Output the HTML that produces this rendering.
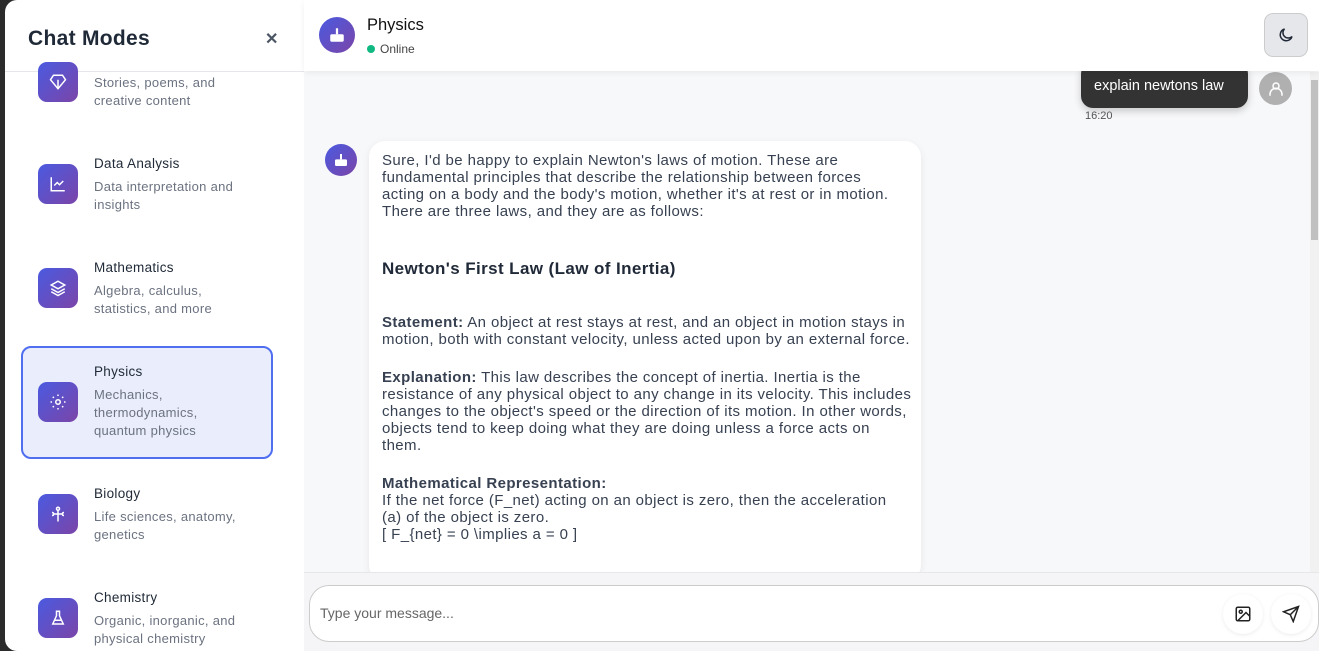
<!DOCTYPE html>
<html><head><meta charset="utf-8"><style>
*{box-sizing:border-box;margin:0;padding:0}
body{width:1319px;height:651px;overflow:hidden;background:#2b2b2b;font-family:"Liberation Sans",sans-serif;position:relative}
.side{position:absolute;left:5px;top:0;width:299px;height:651px;background:#fff;border-radius:12px 0 0 12px;overflow:hidden}
.side h1{position:absolute;left:23px;top:27px;font-size:21px;font-weight:600;color:#1f2937;letter-spacing:.3px}
.close{position:absolute;left:260px;top:29px;font-size:16px;color:#4b5563;font-weight:bold}
.hr{position:absolute;left:0;top:71px;width:299px;height:1px;background:#e5e7eb}
.item{position:absolute;left:33px}
.ic{position:absolute;left:0;width:40px;height:40px;border-radius:9px;background:linear-gradient(135deg,#4a5ae0,#7b45a8);display:flex;align-items:center;justify-content:center}
.t{position:absolute;left:56px;font-size:13.5px;color:#1f2937;white-space:nowrap;letter-spacing:.3px}
.d{position:absolute;left:56px;font-size:13px;color:#6b7280;line-height:18px;white-space:nowrap;letter-spacing:.3px}
.card{position:absolute;left:16px;top:346px;width:252px;height:113px;border:2px solid #4f6ef0;border-radius:10px;background:#eaeefc}
.main{position:absolute;left:304px;top:0;width:1015px;height:651px;background:#f7f8fa}
.hdr{position:absolute;left:0;top:0;width:1015px;height:71px;background:#fff;box-shadow:0 2px 6px rgba(0,0,0,.06);z-index:5}
.av{position:absolute;border-radius:50%;background:linear-gradient(135deg,#4a5ae0,#7b45a8);display:flex;align-items:center;justify-content:center}
.bubble{position:absolute;left:65px;top:141px;width:552px;height:440px;background:#fff;border-radius:16px;box-shadow:0 2px 8px rgba(0,0,0,.07);padding:11px 13px;font-size:15px;line-height:17px;color:#374151;white-space:nowrap;letter-spacing:.4px}
.bubble p{margin-bottom:21px}
.bubble h3{font-size:17px;color:#1f2937;margin:40px 0 37px}
.foot{position:absolute;left:0;top:572px;width:1015px;height:79px;background:#f5f5f7;border-top:1px solid #e5e7eb}
.inp{position:absolute;left:5px;top:12px;width:1010px;height:57px;border:1px solid #ccc;border-radius:20px;background:#fff}
.btn{position:absolute;top:8px;width:40px;height:40px;border-radius:50%;background:#fff;box-shadow:0 1px 4px rgba(0,0,0,.08);display:flex;align-items:center;justify-content:center}
</style></head><body>
<div class="side">
<h1>Chat Modes</h1><div class="close">✕</div>
<div class="hr"></div>
<div class="item" style="top:62px"><div class="ic" style="top:0"><svg width="18" height="18" viewBox="0 0 24 24" fill="none" stroke="#fff" stroke-width="2"><path d="M6 3h12l4 6-10 12L2 9z"/><path d="M12 9v12"/></svg></div><div class="d" style="top:12px">Stories, poems, and<br>creative content</div></div>
<div class="item" style="top:164px"><div class="ic" style="top:0"><svg width="18" height="18" viewBox="0 0 24 24" fill="none" stroke="#fff" stroke-width="2"><path d="M3 3v18h18"/><path d="M7 14l4-4 3 3 5-5"/></svg></div><div class="t" style="top:-8px">Data Analysis</div><div class="d" style="top:14px">Data interpretation and<br>insights</div></div>
<div class="item" style="top:268px"><div class="ic" style="top:0"><svg width="18" height="18" viewBox="0 0 24 24" fill="none" stroke="#fff" stroke-width="2"><path d="M12 3l9 5-9 5-9-5z"/><path d="M3 13l9 5 9-5"/><path d="M3 17l9 5 9-5"/></svg></div><div class="t" style="top:-8px">Mathematics</div><div class="d" style="top:14px">Algebra, calculus,<br>statistics, and more</div></div>
<div class="card"></div>
<div class="item" style="top:382px"><div class="ic" style="top:0"><svg width="18" height="18" viewBox="0 0 24 24" fill="none" stroke="#fff" stroke-width="2"><circle cx="12" cy="12" r="3"/><path d="M12 2v2M12 20v2M2 12h2M20 12h2M5 5l1.5 1.5M17.5 17.5L19 19M5 19l1.5-1.5M17.5 6.5L19 5"/></svg></div><div class="t" style="top:-18px">Physics</div><div class="d" style="top:4px">Mechanics,<br>thermodynamics,<br>quantum physics</div></div>
<div class="item" style="top:494px"><div class="ic" style="top:0"><svg width="18" height="18" viewBox="0 0 24 24" fill="none" stroke="#fff" stroke-width="2"><circle cx="12" cy="5" r="2"/><path d="M12 7v15M4 10c3 0 3 4 0 4M20 10c-3 0-3 4 0 4M6 12h12"/></svg></div><div class="t" style="top:-8px">Biology</div><div class="d" style="top:14px">Life sciences, anatomy,<br>genetics</div></div>
<div class="item" style="top:598px"><div class="ic" style="top:0"><svg width="18" height="18" viewBox="0 0 24 24" fill="none" stroke="#fff" stroke-width="2"><path d="M9 3h6M10 3v6l-5 11h14L14 9V3"/><path d="M7 15h10"/></svg></div><div class="t" style="top:-8px">Chemistry</div><div class="d" style="top:14px">Organic, inorganic, and<br>physical chemistry</div></div>
</div>
<div class="main">
<div class="hdr">
<div class="av" style="left:15px;top:17px;width:36px;height:36px"><svg width="18" height="18" viewBox="0 0 24 24" fill="#fff"><rect x="10.5" y="3" width="3" height="8"/><rect x="3" y="11" width="18" height="10" rx="2"/></svg></div>
<div style="position:absolute;left:63px;top:16px;font-size:16.5px;font-weight:500;color:#111">Physics</div>
<div style="position:absolute;left:63px;top:42px;font-size:12px;color:#444"><span style="display:inline-block;width:8px;height:8px;border-radius:50%;background:#10b981;margin-right:5px"></span>Online</div>
<div style="position:absolute;left:960px;top:13px;width:44px;height:44px;border-radius:9px;background:#e6e7eb;border:1px solid #ccc;display:flex;align-items:center;justify-content:center"><svg width="18" height="18" viewBox="0 0 24 24" fill="none" stroke="#1f2937" stroke-width="2"><path d="M20 14A8 8 0 1 1 10 4a6 6 0 0 0 10 10z"/></svg></div>
</div>
<div style="position:absolute;left:777px;top:62px;width:167px;height:46px;background:#333;border-radius:12px;color:#fff;font-size:14.5px;padding:16px 0 0 13px;box-shadow:0 3px 8px rgba(0,0,0,.2)">explain newtons law</div>
<div style="position:absolute;left:955px;top:72px;width:33px;height:33px;border-radius:50%;background:#b0b0b0;display:flex;align-items:center;justify-content:center"><svg width="18" height="18" viewBox="0 0 24 24" fill="none" stroke="#fff" stroke-width="2"><circle cx="12" cy="8" r="4"/><path d="M4 21v-2a6 6 0 0 1 16 0v2"/></svg></div>
<div style="position:absolute;left:781px;top:110px;font-size:11px;color:#555">16:20</div>
<div class="av" style="left:21px;top:144px;width:32px;height:32px"><svg width="16" height="16" viewBox="0 0 24 24" fill="#fff"><rect x="10.5" y="3" width="3" height="8"/><rect x="3" y="11" width="18" height="10" rx="2"/></svg></div>
<div class="bubble">
<p style="margin:0">Sure, I'd be happy to explain Newton's laws of motion. These are<br>fundamental principles that describe the relationship between forces<br>acting on a body and the body's motion, whether it's at rest or in motion.<br>There are three laws, and they are as follows:</p>
<h3>Newton's First Law (Law of Inertia)</h3>
<p><b>Statement:</b> An object at rest stays at rest, and an object in motion stays in<br>motion, both with constant velocity, unless acted upon by an external force.</p>
<p><b>Explanation:</b> This law describes the concept of inertia. Inertia is the<br>resistance of any physical object to any change in its velocity. This includes<br>changes to the object's speed or the direction of its motion. In other words,<br>objects tend to keep doing what they are doing unless a force acts on<br>them.</p>
<p><b>Mathematical Representation:</b><br>If the net force (F_net) acting on an object is zero, then the acceleration<br>(a) of the object is zero.<br>[ F_{net} = 0 \implies a = 0 ]</p>
</div>
<div style="position:absolute;left:1006px;top:72px;width:9px;height:500px;background:#f1f1f1"><div style="margin:8px 1px 0;height:160px;background:#c1c1c1"></div></div>
<div class="foot"><div class="inp">
<div style="position:absolute;left:10px;top:19px;font-size:14px;color:#666">Type your message...</div>
<div class="btn" style="left:913px"><svg width="18" height="18" viewBox="0 0 24 24" fill="none" stroke="#222" stroke-width="2"><rect x="3" y="3" width="18" height="18" rx="2"/><circle cx="9" cy="9" r="2"/><path d="M21 15l-5-5L5 21"/></svg></div>
<div class="btn" style="left:961px"><svg width="18" height="18" viewBox="0 0 24 24" fill="none" stroke="#222" stroke-width="2"><path d="M22 2L11 13M22 2l-7 20-4-9-9-4z"/></svg></div>
</div></div>
</div>
</body></html>
